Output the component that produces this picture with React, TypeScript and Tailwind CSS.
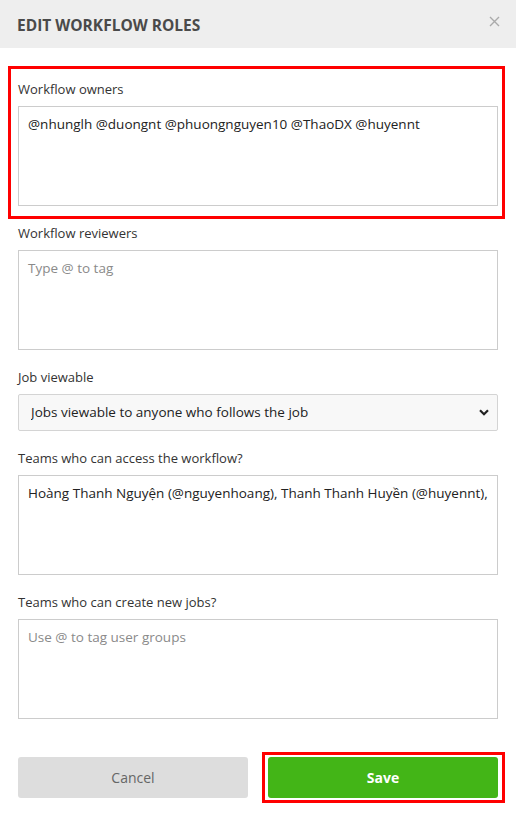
import { useState } from 'react';

const font = { fontFamily: '"Open Sans", "Noto Sans", sans-serif' };

function Field({ label, children }: { label: string; children: React.ReactNode }) {
  return (
    <div className="flex flex-col">
      <label className="text-[13px] leading-5 text-[#333] mb-[7px]">{label}</label>
      {children}
    </div>
  );
}

function Area({ value, placeholder }: { value?: string; placeholder?: string }) {
  return (
    <textarea
      defaultValue={value}
      placeholder={placeholder}
      className="h-[100px] w-full resize-none border border-[#cccccc] bg-white px-[9px] py-[8px] text-[13.5px] leading-[18px] text-[#222] placeholder:text-[#8a8a8a] outline-none"
    />
  );
}

export default function App() {
  const [viewable, setViewable] = useState('followers');

  return (
    <div className="relative w-[516px] h-[818px] bg-white overflow-hidden" style={font}>
      <div className="flex h-12 items-center justify-between bg-[#eeeeee] pl-[17px] pr-[16px]">
        <h2 className="mt-[3px] text-[15.5px] font-bold uppercase text-[#4a4a4a]">Edit workflow roles</h2>
        <button className="mb-[6px] text-[#aaaaaa]">
          <svg width="11" height="11" viewBox="0 0 11 11" stroke="currentColor" strokeWidth="1.4">
            <path d="M1 1l9 9M10 1l-9 9" />
          </svg>
        </button>
      </div>

      <div className="flex flex-col gap-[17px] px-[18px] pt-[31px]">
        <Field label="Workflow owners">
          <Area value="@nhunglh @duongnt @phuongnguyen10 @ThaoDX @huyennt" />
        </Field>
        <Field label="Workflow reviewers">
          <Area placeholder="Type @ to tag" />
        </Field>
        <Field label="Job viewable">
          <div className="relative">
            <select
              value={viewable}
              onChange={(e) => setViewable(e.target.value)}
              className="h-[37px] w-full appearance-none rounded-[2px] border border-[#d4d4d4] bg-[#f8f8f8] pl-[12px] text-[13.5px] text-[#222] outline-none"
            >
              <option value="followers">Jobs viewable to anyone who follows the job</option>
              <option value="everyone">Jobs viewable to everyone</option>
            </select>
            <svg className="pointer-events-none absolute right-[9px] top-[15px]" width="10" height="7" viewBox="0 0 10 7" fill="none" stroke="#222" strokeWidth="2.2">
              <path d="M1 1.2l4 4 4-4" />
            </svg>
          </div>
        </Field>
        <Field label="Teams who can access the workflow?">
          <Area value="Hoàng Thanh Nguyện (@nguyenhoang), Thanh Thanh Huyền (@huyennt)," />
        </Field>
        <Field label="Teams who can create new jobs?">
          <Area placeholder="Use @ to tag user groups" />
        </Field>
      </div>

      <div className="grid grid-cols-2 gap-5 px-[18px] pt-[38px]">
        <button className="h-[41px] rounded-[3px] bg-[#dddddd] text-[14px] text-[#666]">Cancel</button>
        <button className="h-[41px] rounded-[3px] bg-[#43b517] text-[14px] font-bold text-white">Save</button>
      </div>

      <div className="pointer-events-none absolute left-[8px] top-[66px] h-[153px] w-[497px] border-[3px] border-[#ff0000]" />
      <div className="pointer-events-none absolute left-[262px] top-[752px] h-[51px] w-[243px] border-[3px] border-[#ff0000]" />
    </div>
  );
}
